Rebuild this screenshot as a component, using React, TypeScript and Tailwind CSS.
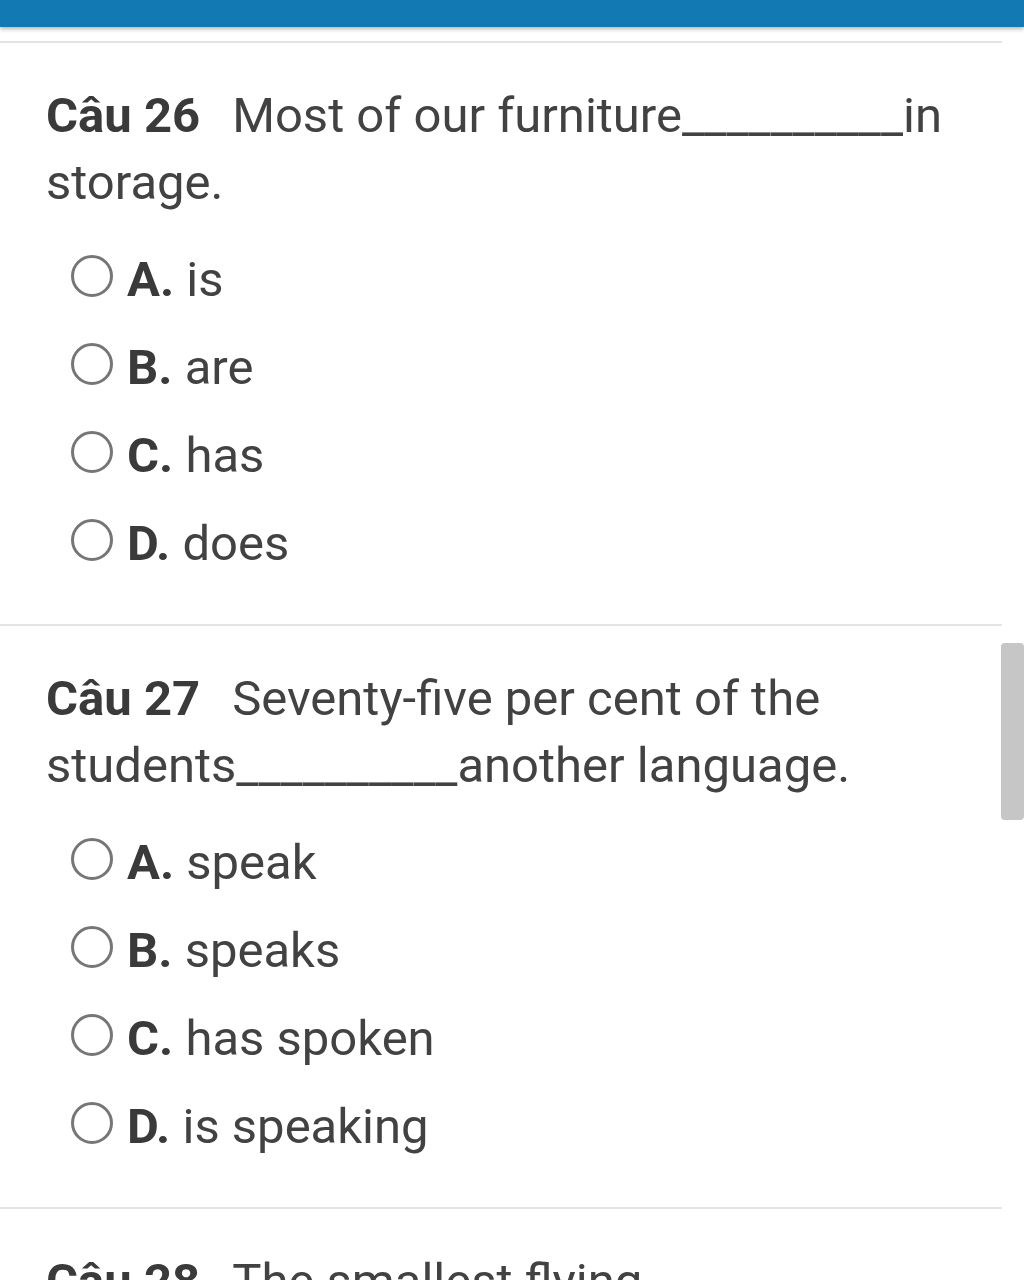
import React from "react";

type Question = {
  no: number;
  text: string;
  options: string[];
};

const questions: Question[] = [
  {
    no: 26,
    text: "Most of our furniture__________in storage.",
    options: ["is", "are", "has", "does"],
  },
  {
    no: 27,
    text: "Seventy-five per cent of the students__________another language.",
    options: ["speak", "speaks", "has spoken", "is speaking"],
  },
  {
    no: 28,
    text: "The smallest flying",
    options: [],
  },
];

const letters = ["A", "B", "C", "D"];

const QuestionBlock = ({ q }: { q: Question }) => {
  return (
    <section className="border-t-2 border-[#e4e4e4] pt-[39px] pb-[36px] pl-[46px] pr-[46px]">
      <p className="text-[49px] leading-[67px]">
        <span className="font-bold text-[#3a3a3a] mr-[32px]">Câu {q.no}</span>
        {q.text}
      </p>
      {q.options.length > 0 && (
        <div className="mt-[20px] pl-[25px]">
          {q.options.map((opt, index) => (
            <div key={index} className="flex items-center h-[88px]">
              <span className="w-[42px] h-[42px] rounded-full border-[3px] border-[#767676] shrink-0 mr-[14px] -translate-y-1" />
              <span className="text-[49px] leading-[88px] whitespace-nowrap">
                <span className="font-bold text-[#3a3a3a]">{letters[index]}.</span> {opt}
              </span>
            </div>
          ))}
        </div>
      )}
    </section>
  );
};

const App = () => {
  return (
    <div className="relative h-[1280px] overflow-hidden bg-white font-[Roboto,sans-serif] text-[#424242]">
      <div className="h-[27px] bg-[#1279b3] shadow-[0_2px_4px_rgba(0,0,0,0.3)]" />
      <div className="w-[1002px] mt-[14px]">
        {questions.map((q) => (
          <QuestionBlock q={q} key={q.no} />
        ))}
      </div>
      {/* scroll thumb */}
      <div className="absolute right-0 top-[643px] w-[23px] h-[177px] rounded-[4px] bg-[#c6c6c6]" />
    </div>
  );
};

export default App;
